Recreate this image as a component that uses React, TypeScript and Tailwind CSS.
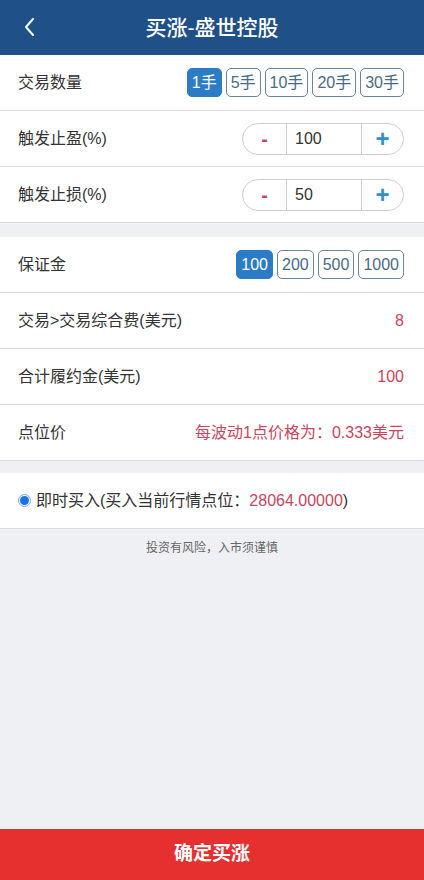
import { useState } from 'react'

const font = { fontFamily: '"Liberation Sans", "Noto Sans CJK SC", sans-serif' }

function Row({ children, className = '' }: { children: React.ReactNode; className?: string }) {
  return (
    <div className={`flex h-[56px] items-center justify-between border-b border-[#dcdcdc] bg-white pl-[18px] pr-[20px] ${className}`}>
      {children}
    </div>
  )
}

function Chips({ items, active, onPick }: { items: string[]; active: number; onPick: (i: number) => void }) {
  return (
    <div className="flex gap-[4px]">
      {items.map((it, i) => (
        <button
          key={it}
          onClick={() => onPick(i)}
          className={
            i === active
              ? 'h-[29px] rounded-[5px] border border-[#2b7cc4] bg-[#2b7cc4] px-[4px] text-[16px] text-white'
              : 'h-[29px] rounded-[5px] border border-[#6a8499] bg-white px-[4px] text-[16px] text-[#4b6a86]'
          }
        >
          {it}
        </button>
      ))}
    </div>
  )
}

function Stepper({ value }: { value: number }) {
  return (
    <div className="flex h-[32px] w-[162px] items-stretch rounded-full border border-[#cfcfcf] bg-white">
      <button className="flex w-[43px] items-center justify-center text-[20px] font-bold text-[#c9435a]">-</button>
      <div className="flex w-[76px] items-center border-x border-[#cfcfcf] pl-[8px] text-[16px] text-[#333]">{value}</div>
      <button className="flex flex-1 items-center justify-center text-[24px] font-bold leading-none text-[#2f8fd0]">+</button>
    </div>
  )
}

export default function App() {
  const [lots, setLots] = useState(0)
  const [margin, setMargin] = useState(0)

  return (
    <div className="flex min-h-screen flex-col bg-[#eff0f4] text-[16px] text-[#333]" style={font}>
      <header className="relative flex h-[55px] items-center justify-center bg-[#1f5088] text-white">
        <svg className="absolute left-[22px] top-[17px]" width="16" height="20" viewBox="0 0 16 20" fill="none">
          <path d="M11 2 L4 10 L11 18" stroke="white" strokeWidth="2" strokeLinecap="round" strokeLinejoin="round" />
        </svg>
        <h1 className="text-[21px] font-medium">买涨-盛世控股</h1>
      </header>

      <Row>
        <span>交易数量</span>
        <Chips items={['1手', '5手', '10手', '20手', '30手']} active={lots} onPick={setLots} />
      </Row>
      <Row>
        <span>触发止盈(%)</span>
        <Stepper value={100} />
      </Row>
      <Row>
        <span>触发止损(%)</span>
        <Stepper value={50} />
      </Row>

      <div className="mt-[14px]">
        <Row>
          <span>保证金</span>
          <Chips items={['100', '200', '500', '1000']} active={margin} onPick={setMargin} />
        </Row>
        <Row>
          <span>交易&gt;交易综合费(美元)</span>
          <span className="text-[#c94561]">8</span>
        </Row>
        <Row>
          <span>合计履约金(美元)</span>
          <span className="text-[#c94561]">100</span>
        </Row>
        <Row>
          <span>点位价</span>
          <span className="text-[#c94561]">每波动1点价格为：0.333美元</span>
        </Row>
      </div>

      <div className="mt-[12px]">
        <Row className="justify-start">
          <label className="flex items-center gap-[5px]">
            <span className="flex h-[13px] w-[13px] items-center justify-center rounded-full border border-[#7aa7d8] bg-white">
              <span className="h-[9px] w-[9px] rounded-full bg-[#1a73e0]" />
            </span>
            <span>
              即时买入(买入当前行情点位：<span className="text-[#c94561]">28064.00000</span>)
            </span>
          </label>
        </Row>
      </div>

      <p className="mt-[10px] text-center text-[12px] text-[#666]">投资有风险，入市须谨慎</p>

      <button className="mt-auto h-[51px] w-full bg-[#e62f2f] text-[19px] font-bold text-white">确定买涨</button>
    </div>
  )
}
